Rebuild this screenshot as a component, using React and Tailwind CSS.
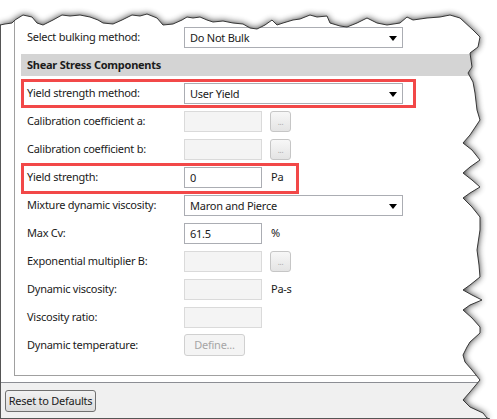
import React from 'react';

const EDGE = [
  [0, 25], [5, 24], [12, 23], [15, 20], [23, 15], [32, 17], [37, 23], [43, 25], [53, 20], [62, 15],
  [70, 16], [80, 15], [90, 17], [98, 20], [103, 23], [113, 24], [122, 20], [132, 15], [140, 16],
  [147, 14], [157, 18], [163, 25], [173, 24], [182, 20], [187, 17], [193, 18], [200, 17], [207, 20],
  [213, 22], [223, 21], [233, 23], [243, 24], [250, 28], [257, 29], [265, 25], [272, 20], [277, 25],
  [283, 23], [293, 20], [300, 19], [310, 15], [317, 17], [327, 16], [330, 23], [340, 26], [347, 27],
  [357, 23], [367, 18], [377, 23], [387, 25], [400, 23], [407, 17], [413, 20], [427, 18], [440, 17],
  [450, 15], [460, 18], [473, 30], [480, 37], [478, 47], [470, 53], [472, 67], [468, 73], [473, 82],
  [475, 93], [477, 110], [480, 120], [470, 135], [463, 143], [472, 150], [480, 160], [470, 167],
  [463, 173], [472, 180], [480, 187], [470, 193], [463, 198], [472, 207], [480, 217], [480, 230],
  [477, 250], [479, 265], [480, 277], [470, 285], [463, 290], [472, 295], [482, 300], [470, 305],
  [463, 310], [472, 318], [480, 327], [480, 333], [470, 342], [467, 347], [463, 355], [465, 362],
  [472, 370], [480, 380], [470, 392], [463, 400], [470, 407], [483, 413], [487, 418], [490, 419],
];

const edgeLine = EDGE.map(([x, y], i) => `${i ? 'L' : 'M'}${x} ${y}`).join(' ');
const inner = `${edgeLine} L0 419 Z`;

function TornEdge() {
  return (
    <svg className="absolute inset-0 pointer-events-none" width="497" height="419" viewBox="0 0 497 419">
      <defs>
        <clipPath id="outside">
          <path clipRule="evenodd" fillRule="evenodd" d={`M0 0H497V419H0Z ${inner}`} />
        </clipPath>
        <filter id="blur" x="-10%" y="-10%" width="120%" height="120%">
          <feGaussianBlur stdDeviation="3.5" />
        </filter>
      </defs>
      <g clipPath="url(#outside)">
        <rect width="497" height="419" fill="#fff" />
        <path d={inner} fill="#000" opacity="0.85" filter="url(#blur)" />
      </g>
      <path d={edgeLine} fill="none" stroke="#383838" strokeWidth="1" />
    </svg>
  );
}

function Arrow() {
  return (
    <svg width="8" height="5" viewBox="0 0 8 5" className="absolute right-[5px] top-[8px]">
      <path d="M0 0H8L4 5Z" fill="#000" />
    </svg>
  );
}

function Select({ value }) {
  return (
    <div className="relative w-[219px] h-[21px] border border-[#abadb3] bg-white pl-[5px] leading-[19px]">
      {value}
      <Arrow />
    </div>
  );
}

function Input({ value, disabled }) {
  return (
    <div
      className={`w-[78px] h-[21px] border pl-[5px] leading-[19px] ${
        disabled ? 'border-[#dadada] bg-[#f4f4f4]' : 'border-[#abadb3] bg-white'
      }`}
    >
      {value}
    </div>
  );
}

function DotsButton() {
  return (
    <div className="ml-[8px] w-[21px] h-[21px] border border-[#c6c6c6] rounded-[3px] bg-gradient-to-b from-[#f7f7f7] to-[#e4e4e4] flex items-center justify-center text-[8px] text-[#a8a8a8] leading-none pt-[2px]">
      ...
    </div>
  );
}

function Unit({ children }) {
  return <span className="ml-[9px]">{children}</span>;
}

function Row({ label, children, box }) {
  return (
    <div className="relative h-[28px] flex items-center">
      <div className="w-[163px] pl-[6px] shrink-0 whitespace-nowrap">{label}</div>
      <div className="flex items-center">{children}</div>
      {box}
    </div>
  );
}

export default function App() {
  return (
    <div
      className="relative w-[497px] h-[419px] overflow-hidden bg-white text-[11px] tracking-[-0.25px] text-[#1b1b1b]"
      style={{ fontFamily: '"Noto Sans", "Open Sans", sans-serif' }}
    >
      <div className="flex flex-col h-full border-l border-[#555]">
        <div className="h-[376px] ml-[13px] border-l border-b border-[#a0a0a0]">
          <div className="pt-[23px] pl-[6px] w-[460px]">
            <Row label="Select bulking method:">
              <Select value="Do Not Bulk" />
            </Row>
            <div className="h-[28px] flex items-center">
              <div className="h-[22px] w-full bg-[#d4d4d4] pl-[6px] font-bold leading-[22px]">
                Shear Stress Components
              </div>
            </div>
            <Row
              label="Yield strength method:"
              box={<div className="absolute left-0 top-0 w-[395px] h-[29px] border-[3px] border-[#f24848]" />}
            >
              <Select value="User Yield" />
            </Row>
            <Row label="Calibration coefficient a:">
              <Input disabled />
              <DotsButton />
            </Row>
            <Row label="Calibration coefficient b:">
              <Input disabled />
              <DotsButton />
            </Row>
            <Row
              label="Yield strength:"
              box={<div className="absolute left-0 top-0 w-[278px] h-[31px] border-[3px] border-[#f24848]" />}
            >
              <Input value="0" />
              <Unit>Pa</Unit>
            </Row>
            <Row label="Mixture dynamic viscosity:">
              <Select value="Maron and Pierce" />
            </Row>
            <Row label="Max Cv:">
              <Input value="61.5" />
              <Unit>%</Unit>
            </Row>
            <Row label="Exponential multiplier B:">
              <Input disabled />
              <DotsButton />
            </Row>
            <Row label="Dynamic viscosity:">
              <Input disabled />
              <Unit>Pa-s</Unit>
            </Row>
            <Row label="Viscosity ratio:">
              <Input disabled />
            </Row>
            <Row label="Dynamic temperature:">
              <div className="w-[61px] h-[22px] border border-[#d0d0d0] rounded-[3px] bg-[#f4f4f4] text-[#a6a6a6] flex items-center justify-center">
                Define...
              </div>
            </Row>
          </div>
        </div>
        <div className="h-[6px]" />
        <div className="h-[37px] border-t border-b border-t-[#8c8e94] border-b-[#555] bg-[#f0f0f0] pt-[7px] pl-[4px]">
          <div className="w-[91px] h-[22px] border border-[#707070] rounded-[3px] bg-gradient-to-b from-[#f2f2f2] to-[#dcdcdc] flex items-center justify-center whitespace-nowrap">
            Reset to Defaults
          </div>
        </div>
      </div>
      <TornEdge />
    </div>
  );
}
